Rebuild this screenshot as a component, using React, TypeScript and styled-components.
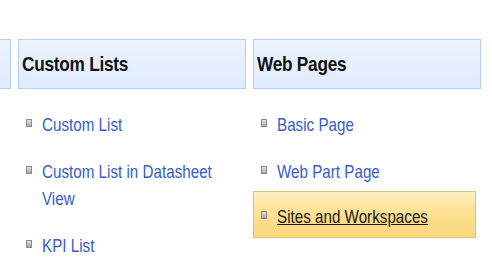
import React from "react";
import styled, { createGlobalStyle } from "styled-components";

const GlobalStyle = createGlobalStyle`
  html, body {
    margin: 0;
    padding: 0;
    background: #ffffff;
    overflow: hidden;
  }
  body {
    font-family: "Liberation Sans", Arial, sans-serif;
  }
`;

const Page = styled.div`
  width: 492px;
  height: 259px;
  overflow: hidden;
`;

const Columns = styled.div`
  display: grid;
  grid-template-columns: repeat(3, 228px);
  column-gap: 7px;
  margin-left: -217px;
  padding-top: 39px;
`;

const Column = styled.div`
  display: flex;
  flex-direction: column;
  min-width: 0;
`;

const Header = styled.div`
  height: 48px;
  display: flex;
  align-items: center;
  padding-left: 3px;
  border: 1px solid #b3d1f8;
  background: linear-gradient(to bottom, #ecf3fe 0%, #dfebfd 100%);
  overflow: hidden;
`;

const HeaderText = styled.span`
  display: inline-block;
  font-size: 21px;
  font-weight: bold;
  letter-spacing: -0.3px;
  color: #111111;
  white-space: nowrap;
  transform: scaleX(0.82);
  transform-origin: left center;
`;

const List = styled.ul`
  list-style: none;
  margin: 0;
  padding: 12px 5px 0 0;
`;

const Item = styled.li<{ $active?: boolean }>`
  display: flex;
  align-items: flex-start;
  margin-top: ${(p) => (p.$active ? "-4px" : "0")};
  padding: ${(p) => (p.$active ? "11px 0 7px 7px" : "9px 0 9px 7px")};
  border: 1px solid ${(p) => (p.$active ? "#dcc183" : "transparent")};
  background: ${(p) =>
    p.$active
      ? "linear-gradient(to bottom, #fff0c2 0%, #fee39a 35%, #fdd77c 100%)"
      : "transparent"};
`;

const Bullet = styled.span`
  flex: none;
  width: 4px;
  height: 6px;
  margin-top: 8px;
  margin-right: 10px;
  border: 1px solid #8a8a8a;
  background: linear-gradient(to bottom, #e2e2e2, #a6a6a6);
`;

const Link = styled.a<{ $active?: boolean }>`
  flex: none;
  display: inline-block;
  width: 228px;
  font-size: 19px;
  line-height: 27px;
  color: ${(p) => (p.$active ? "#1a1a1a" : "#3a5dc4")};
  text-decoration: ${(p) => (p.$active ? "underline" : "none")};
  transform: scaleX(0.8);
  transform-origin: left top;
`;

type Col = { title: string; items: { label: string; active?: boolean }[] };

const columns: Col[] = [
  { title: "", items: [] },
  {
    title: "Custom Lists",
    items: [
      { label: "Custom List" },
      { label: "Custom List in Datasheet View" },
      { label: "KPI List" },
    ],
  },
  {
    title: "Web Pages",
    items: [
      { label: "Basic Page" },
      { label: "Web Part Page" },
      { label: "Sites and Workspaces", active: true },
    ],
  },
];

export default function App() {
  return (
    <Page>
      <GlobalStyle />
      <Columns>
        {columns.map((col, i) => (
          <Column key={i}>
            <Header>{col.title && <HeaderText>{col.title}</HeaderText>}</Header>
            <List>
              {col.items.map((it) => (
                <Item key={it.label} $active={it.active}>
                  <Bullet />
                  <Link href="#" $active={it.active}>
                    {it.label}
                  </Link>
                </Item>
              ))}
            </List>
          </Column>
        ))}
      </Columns>
    </Page>
  );
}
